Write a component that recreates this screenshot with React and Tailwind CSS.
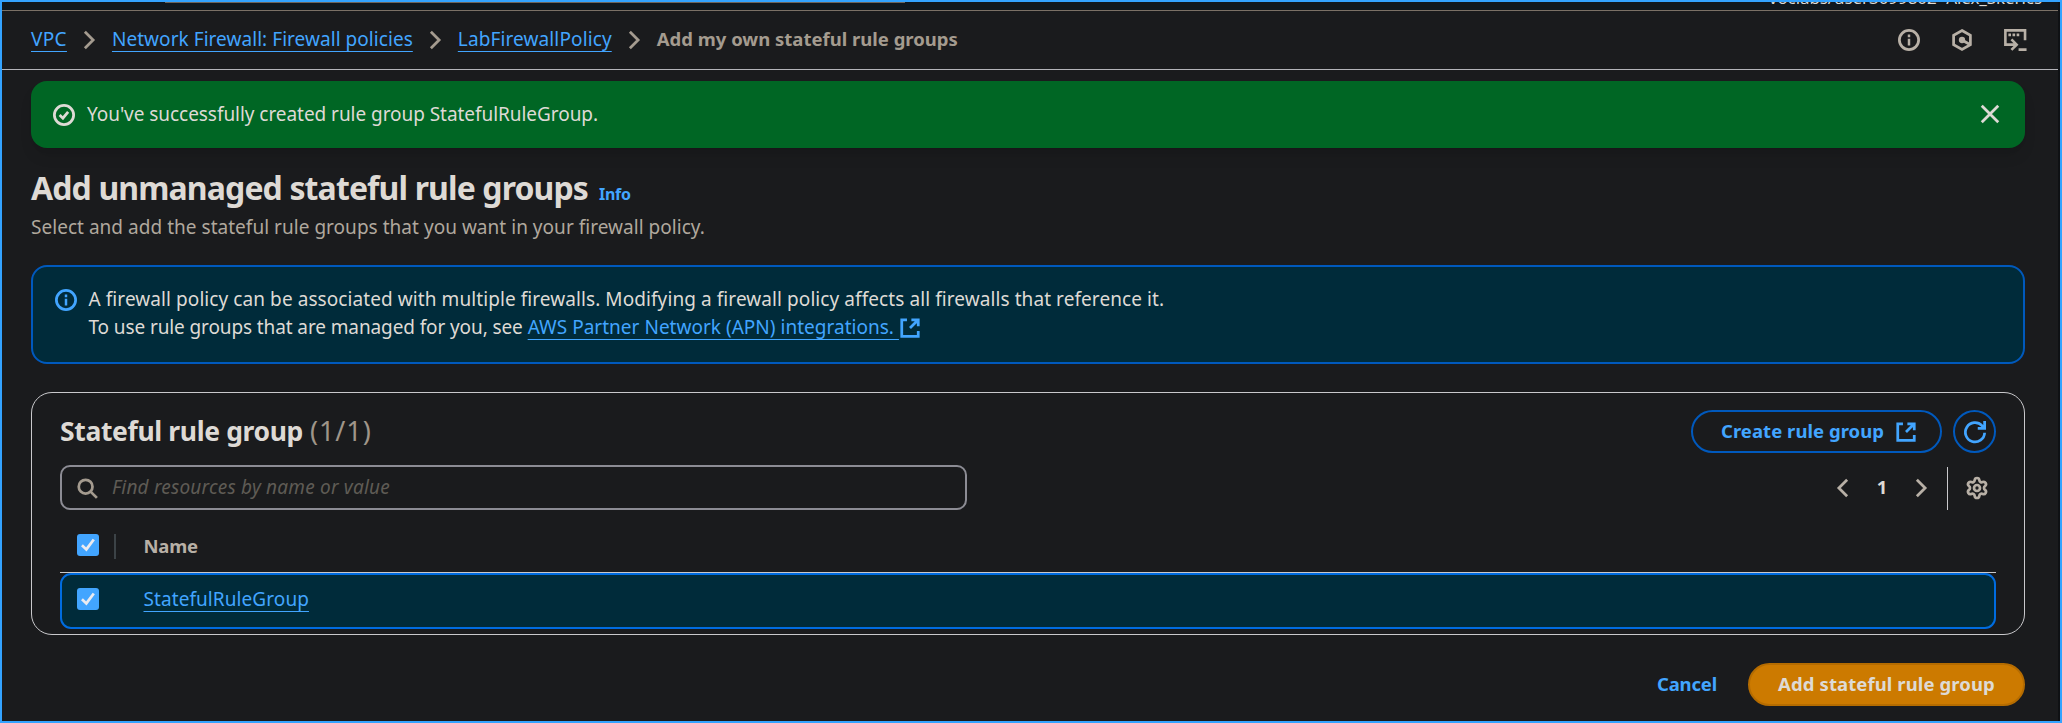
import { Settings } from 'lucide-react';

function Icon({ children, className = '' }) {
  return (
    <svg
      viewBox="0 0 16 16"
      fill="none"
      stroke="currentColor"
      strokeWidth="2"
      className={`h-[22px] w-[22px] shrink-0 overflow-visible ${className}`}
    >
      {children}
    </svg>
  );
}

function ChevronRight({ className }) {
  return (
    <Icon className={className}>
      <path d="M5 2l6 6-6 6" />
    </Icon>
  );
}

function InfoIcon({ className }) {
  return (
    <Icon className={className}>
      <circle cx="8" cy="8" r="7" />
      <path d="M8 7v5M8 4v2" strokeWidth="1.8" />
    </Icon>
  );
}

function ExternalIcon({ className }) {
  return (
    <Icon className={className}>
      <path d="M9 2h5v4.8M8 8l6-6M14 10.2V14H2V2h3.8" />
    </Icon>
  );
}

function Checkbox({ className = '' }) {
  return (
    <span className={`flex h-[22px] w-[22px] shrink-0 rounded-[3px] bg-[#42a5ff] ${className}`}>
      <Icon className="text-[#ebebf0]">
        <path d="M3.6 8.2l3.2 3 5.4-7.2" />
      </Icon>
    </span>
  );
}

const linkClass =
  'text-[#42a5ff] underline decoration-1 underline-offset-[5px] [text-decoration-skip-ink:none]';

function Breadcrumbs() {
  return (
    <nav className="flex items-center gap-[11.5px] pb-[2px]">
      <a className={`${linkClass} tracking-[0.35px]`}>VPC</a>
      <ChevronRight className="translate-y-px text-[#a49b8f]" />
      <a className={`${linkClass} tracking-[0.05px]`}>Network Firewall: Firewall policies</a>
      <ChevronRight className="translate-y-px text-[#a49b8f]" />
      <a className={`${linkClass} tracking-[0.12px]`}>LabFirewallPolicy</a>
      <ChevronRight className="translate-y-px text-[#a49b8f]" />
      <span className="text-[18.5px] font-bold text-[#a49b8f]">Add my own stateful rule groups</span>
    </nav>
  );
}

function RuleGroupCard() {
  return (
    <section className="mt-7 h-[243px] rounded-[21px] border border-[#c9c9cc] px-7 pt-[17px]">
      <div className="flex h-[43px] items-center">
        <h2 className="pb-[2px] text-[26.5px] leading-[34px] font-bold tracking-[-0.36px] text-[#dedad5]">
          Stateful rule group
        </h2>
        <span className="ml-[7px] pb-[2px] text-[27px] leading-[34px] tracking-[0.9px] text-[#9f9589]">(1/1)</span>
        <button className="ml-auto flex h-[43px] w-[251px] items-center rounded-full border-2 border-[#0059bd] pl-7 text-[18.5px] font-bold tracking-[0.04px] text-[#42a5ff]">
          <span className="pb-[2px]">Create rule group</span>
          <ExternalIcon className="ml-[11px]" />
        </button>
        <button className="ml-[11px] flex h-[43px] w-[43px] items-center justify-center rounded-full border-2 border-[#0059bd] text-[#42a5ff]">
          <Icon>
            <path d="M15 8.5a7 7 0 1 1-1.9-5.1L14.8 5M15 0v5.3h-5" />
          </Icon>
        </button>
      </div>

      <div className="mt-3 flex h-[45px] items-center">
        <div className="flex h-[45px] w-[907px] items-center rounded-[10px] border-2 border-[#8c8c94] pl-[14px]">
          <Icon className="text-[#a49b8f]">
            <circle cx="7" cy="7" r="5" />
            <path d="M10.8 10.8l4.4 4.4" />
          </Icon>
          <span className="ml-[14px] pb-[2px] tracking-[0.21px] text-[#5f5b55] italic">
            Find resources by name or value
          </span>
        </div>
        <div className="ml-auto flex items-center text-[#b8b0a6]">
          <Icon>
            <path d="M11 2L5 8l6 6" />
          </Icon>
          <span className="w-[56px] pb-px text-center text-[18.5px] font-bold text-[#dedad5]">1</span>
          <ChevronRight />
          <span className="ml-[15px] h-[43px] w-px translate-y-px bg-[#c9c9cc]" />
          <Settings className="mr-[7px] ml-[17px] h-6 w-6" strokeWidth={2.7} />
        </div>
      </div>

      <div className="flex h-[63px] border-b border-[#c9c9cc] pt-6 pl-[17px]">
        <Checkbox />
        <span className="ml-[15px] h-[25px] w-[2px] bg-[#3c4347]" />
        <span className="ml-[27.5px] text-[18.5px] leading-6 font-bold tracking-[-0.2px] text-[#b8b0a6]">Name</span>
      </div>
      <div className="flex h-14 rounded-[11px] border-2 border-[#006ce0] bg-[#002b3a] pt-[13px] pl-[15px]">
        <Checkbox />
        <a className={`${linkClass} ml-[44.5px] leading-[22px] tracking-[0.08px]`}>StatefulRuleGroup</a>
      </div>
    </section>
  );
}

export default function App() {
  return (
    <div className="flex h-[723px] w-[2062px] overflow-hidden border-2 border-[#33a3ff] bg-[#1a1b1d] font-['Noto_Sans','Open_Sans',sans-serif] text-[19px] leading-7">
      <div className="flex flex-1 flex-col">
        {/* bottom edge of the scrolled global navigation */}
        <div className="flex h-[9px] items-start overflow-hidden border-b border-[#7b7166] bg-[#10171d]">
          <div className="ml-[163px] h-px w-[740px] bg-[#6d645b]" />
          <span className="mt-[-14px] mr-4 ml-auto text-[17px] leading-5 tracking-[-0.08px] text-[#dedad5]">
            voclabs/user3099802=Alex_Skerics
          </span>
        </div>

        <header className="flex h-[59px] items-center justify-between border-b border-[#b4b4b9] pr-8 pl-[29px]">
          <Breadcrumbs />
          <div className="flex items-center gap-[31px] text-[#b8b0a6]">
            <InfoIcon />
            <Icon>
              <path d="M8 1.1l6.1 3.5v6.8L8 14.9l-6.1-3.5V4.6z" />
              <circle cx="8" cy="8" r="2.3" fill="currentColor" stroke="none" />
              <path d="M8 8l5.4 3.1" />
            </Icon>
            <Icon>
              <path d="M15.3 8.2V1H1v10.4h8M5.4 7.6l3.8 3.8-3.8 3.8M10.6 15h5.8" strokeWidth="1.9" />
              <path d="M3.2 4.2h1.9M6.2 4.2h1.9M9.2 4.2h1.9" />
            </Icon>
          </div>
        </header>

        <main className="pr-[33px] pl-[29px]">
          <div className="mt-[11px] flex h-[67px] items-center rounded-[16px] bg-[#006624] pr-[24px] pl-[22px] text-[#dedad5] shadow-lg">
            <Icon>
              <circle cx="8" cy="8" r="7" />
              <path d="M4.8 8l2.4 2.3 3.8-4.6" />
            </Icon>
            <span className="ml-3 pb-[2px] tracking-[-0.05px]">
              You've successfully created rule group StatefulRuleGroup.
            </span>
            <Icon className="mb-px ml-auto">
              <path d="M2 2l12 12M14 2L2 14" />
            </Icon>
          </div>

          <div className="mt-5 flex h-10 items-baseline">
            <h1 className="text-[32px] leading-10 font-bold tracking-[-0.88px] text-[#dedad5]">
              Add unmanaged stateful rule groups
            </h1>
            <a className="ml-[11px] text-base font-bold tracking-[-0.3px] text-[#42a5ff]">Info</a>
          </div>
          <p className="mt-[5px] tracking-[0.03px] text-[#b0a89d]">
            Select and add the stateful rule groups that you want in your firewall policy.
          </p>

          <div className="mt-6 flex h-[99px] rounded-[16px] border-2 border-[#0059bd] bg-[#002b3a] pt-[18px] pl-[22px] text-[#dedad5]">
            <InfoIcon className="mt-1 text-[#42a5ff]" />
            <div className="ml-[11.5px]">
              <p className="tracking-[0.08px]">
                A firewall policy can be associated with multiple firewalls. Modifying a firewall policy affects all
                firewalls that reference it.
              </p>
              <p className="flex tracking-[-0.11px]">
                To use rule groups that are managed for you, see
                <a className={`${linkClass} ml-[5px] tracking-[0.02px] whitespace-pre`}>
                  {'AWS Partner Network (APN) integrations. '}
                </a>
                <ExternalIcon className="mt-[4px] text-[#42a5ff]" />
              </p>
            </div>
          </div>

          <RuleGroupCard />

          <div className="mt-7 flex h-[43px] items-center justify-end text-[18.5px]">
            <button className="mr-[31px] pb-px font-bold tracking-[-0.18px] text-[#42a5ff]">Cancel</button>
            <button className="h-[43px] w-[277px] rounded-full border-2 border-[#b56c00] bg-[#cc7a00] pb-px font-bold tracking-[0.1px] text-[#dedad5]">
              Add stateful rule group
            </button>
          </div>
        </main>
      </div>
      <div className="w-[2px] bg-[#0f1114]" />
    </div>
  );
}
